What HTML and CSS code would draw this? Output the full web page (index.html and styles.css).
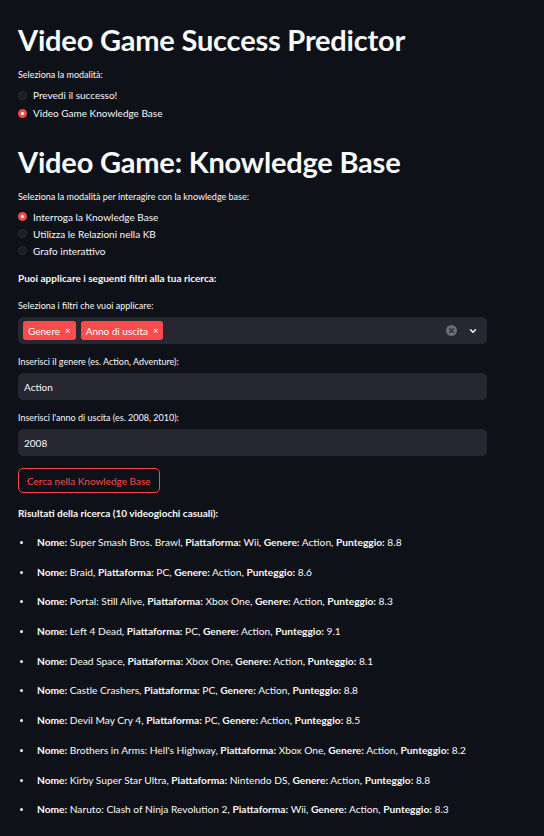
FILE: index.html
```html
<!DOCTYPE html>
<html lang="it">
<head>
<meta charset="utf-8">
<title>Video Game Success Predictor</title>
<link rel="stylesheet" href="styles.css">
</head>
<body>
<main class="app">
  <h1 class="title t1">Video Game Success Predictor</h1>
  <div class="field">
    <div class="label">Seleziona la modalità:</div>
    <div class="radios">
      <div class="radio"><span class="dot"></span><span>Prevedi il successo!</span></div>
      <div class="radio"><span class="dot on"></span><span>Video Game Knowledge Base</span></div>
    </div>
  </div>

  <h1 class="title t2">Video Game: Knowledge Base</h1>
  <div class="field">
    <div class="label">Seleziona la modalità per interagire con la knowledge base:</div>
    <div class="radios tight">
      <div class="radio"><span class="dot on"></span><span>Interroga la Knowledge Base</span></div>
      <div class="radio"><span class="dot"></span><span>Utilizza le Relazioni nella KB</span></div>
      <div class="radio"><span class="dot"></span><span>Grafo interattivo</span></div>
    </div>
  </div>

  <p class="strong intro">Puoi applicare i seguenti filtri alla tua ricerca:</p>

  <div class="field first">
    <div class="label">Seleziona i filtri che vuoi applicare:</div>
    <div class="select">
      <span class="tag">Genere <span class="x">×</span></span>
      <span class="tag">Anno di uscita <span class="x">×</span></span>
      <span class="spacer"></span>
      <svg class="clear" width="11" height="11" viewBox="0 0 12 12"><circle cx="6" cy="6" r="6" fill="#6b6c75"/><path d="M4 4l4 4M8 4l-4 4" stroke="#262730" stroke-width="1.4" stroke-linecap="round"/></svg>
      <svg class="chev" width="10" height="10" viewBox="0 0 10 10"><path d="M2.5 3.8l2.5 2.4 2.5-2.4" fill="none" stroke="#fafafa" stroke-width="1.5" stroke-linecap="round" stroke-linejoin="round"/></svg>
    </div>
  </div>

  <div class="field input-field">
    <div class="label">Inserisci il genere (es. Action, Adventure):</div>
    <div class="input">Action</div>
  </div>

  <div class="field input-field">
    <div class="label">Inserisci l'anno di uscita (es. 2008, 2010):</div>
    <div class="input">2008</div>
  </div>

  <button class="btn">Cerca nella Knowledge Base</button>

  <p class="strong results">Risultati della ricerca (10 videogiochi casuali):</p>

  <ul class="list">
    <li><b>Nome:</b> Super Smash Bros. Brawl, <b>Piattaforma:</b> Wii, <b>Genere:</b> Action, <b>Punteggio:</b> 8.8</li>
    <li><b>Nome:</b> Braid, <b>Piattaforma:</b> PC, <b>Genere:</b> Action, <b>Punteggio:</b> 8.6</li>
    <li><b>Nome:</b> Portal: Still Alive, <b>Piattaforma:</b> Xbox One, <b>Genere:</b> Action, <b>Punteggio:</b> 8.3</li>
    <li><b>Nome:</b> Left 4 Dead, <b>Piattaforma:</b> PC, <b>Genere:</b> Action, <b>Punteggio:</b> 9.1</li>
    <li><b>Nome:</b> Dead Space, <b>Piattaforma:</b> Xbox One, <b>Genere:</b> Action, <b>Punteggio:</b> 8.1</li>
    <li><b>Nome:</b> Castle Crashers, <b>Piattaforma:</b> PC, <b>Genere:</b> Action, <b>Punteggio:</b> 8.8</li>
    <li><b>Nome:</b> Devil May Cry 4, <b>Piattaforma:</b> PC, <b>Genere:</b> Action, <b>Punteggio:</b> 8.5</li>
    <li><b>Nome:</b> Brothers in Arms: Hell's Highway, <b>Piattaforma:</b> Xbox One, <b>Genere:</b> Action, <b>Punteggio:</b> 8.2</li>
    <li><b>Nome:</b> Kirby Super Star Ultra, <b>Piattaforma:</b> Nintendo DS, <b>Genere:</b> Action, <b>Punteggio:</b> 8.8</li>
    <li><b>Nome:</b> Naruto: Clash of Ninja Revolution 2, <b>Piattaforma:</b> Wii, <b>Genere:</b> Action, <b>Punteggio:</b> 8.3</li>
  </ul>
</main>
</body>
</html>
```

FILE: styles.css
```css
* { box-sizing: border-box; }
html, body { margin: 0; padding: 0; }
body {
  background: #0e1117;
  color: #fafafa;
  font-family: Lato, "Open Sans", sans-serif;
  font-size: 10.2px;
  height: 836px;
  overflow: hidden;
}
.app {
  width: 469px;
  margin-left: 18px;
  padding-top: 22px;
}
.title {
  margin: 0;
  font-weight: 700;
  font-size: 29px;
  line-height: 36px;
  letter-spacing: -0.2px;
}
.t2 { margin-top: 22px; }
.field { margin-top: 10px; }
.field.first { margin-top: 14px; }
.field.input-field { margin-top: 11px; }
.label {
  font-size: 9px;
  line-height: 14px;
  margin-bottom: 4px;
}
.radios { display: flex; flex-direction: column; }
.radio {
  display: flex;
  align-items: center;
  gap: 6px;
  height: 18px;
  font-size: 10px;
}
.radios.tight { margin-top: 1px; }
.radios.tight .radio { height: 17px; }
.dot {
  width: 9px;
  height: 9px;
  border-radius: 50%;
  background: #1c1e26;
  border: 1px solid #2c2e38;
  flex: none;
  position: relative;
}
.dot.on {
  background: #ff4b4b;
  border-color: #ff4b4b;
}
.dot.on::after {
  content: "";
  position: absolute;
  left: 2px; top: 2px;
  width: 3px; height: 3px;
  border-radius: 50%;
  background: #fff;
}
.strong { font-weight: 700; font-size: 10px; margin: 0; line-height: 14px; }
.intro { margin-top: 12px; }
.select {
  display: flex;
  align-items: center;
  gap: 5px;
  height: 27px;
  background: #262730;
  border-radius: 5px;
  padding: 0 9px 0 5px;
}
.tag {
  background: #ff4b4b;
  color: #fff;
  border-radius: 3px;
  height: 19px;
  display: inline-flex;
  align-items: center;
  padding: 0 5px;
  font-size: 10px;
  gap: 5px;
}
.x { font-size: 9.5px; }
.spacer { flex: 1; }
.chev { margin-left: 6px; }
.input {
  height: 27px;
  background: #262730;
  border-radius: 5px;
  padding: 0 6px;
  display: flex;
  align-items: center;
  font-size: 10px;
}
.btn {
  margin-top: 12px;
  display: block;
  background: transparent;
  border: 1px solid #ff4b4b;
  color: #ff4b4b;
  border-radius: 5px;
  height: 25px;
  padding: 0 8px;
  font-family: inherit;
  font-size: 10px;
}
.results { margin-top: 13px; }
.list {
  margin: 0;
  padding: 15px 0 0 19px;
  list-style: none;
}
.list li {
  position: relative;
  font-size: 10.2px;
  line-height: 14px;
  margin-bottom: 15.7px;
}
.list li::before {
  content: "";
  position: absolute;
  left: -17px;
  top: 6px;
  width: 3px; height: 3px;
  border-radius: 50%;
  background: #fafafa;
}
b { font-weight: 700; }
```
